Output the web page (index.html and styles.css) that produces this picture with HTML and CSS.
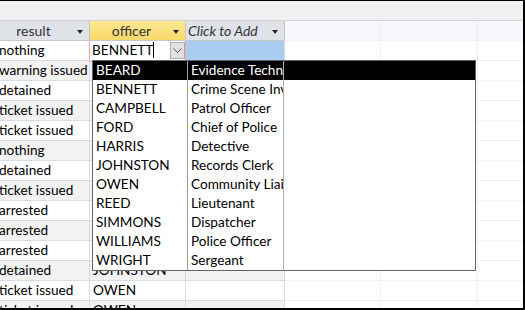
FILE: index.html
```html
<!DOCTYPE html>
<html>
<head>
<meta charset="utf-8">
<link rel="stylesheet" href="styles.css">
</head>
<body>
<div class="frame">
  <div class="topbar"></div>
  <div class="viewport">
    <div class="sheet">
      <div class="row head">
        <div class="cell c1 hd"><span class="htxt">result</span><span class="arr"></span></div>
        <div class="cell c2 hd cur"><span class="htxt">officer</span><span class="arr"></span></div>
        <div class="cell c3 hd"><span class="htxt add">Click to Add</span><span class="arr"></span></div>
        <div class="cell c4 hde"></div>
        <div class="cell c5 hde"></div>
        <div class="cell c6 hde"></div>
      </div>
      <div class="row">
        <div class="cell c1">nothing</div>
        <div class="cell c2 edit"><span class="val">BENNETT<span class="caret"></span></span><span class="btn"><svg width="9" height="6" viewBox="0 0 9 6"><path d="M0.5 0.5 L4.5 4.5 L8.5 0.5" fill="none" stroke="#555" stroke-width="1"/></svg></span></div>
        <div class="cell c3 sel"></div>
        <div class="cell c4 e"></div><div class="cell c5 e"></div><div class="cell c6 e"></div>
      </div>
      <div class="row alt">
        <div class="cell c1">warning issued</div><div class="cell c2"></div><div class="cell c3"></div>
        <div class="cell c4 e"></div><div class="cell c5 e"></div><div class="cell c6 e"></div>
      </div>
      <div class="row">
        <div class="cell c1">detained</div><div class="cell c2"></div><div class="cell c3"></div>
        <div class="cell c4 e"></div><div class="cell c5 e"></div><div class="cell c6 e"></div>
      </div>
      <div class="row alt">
        <div class="cell c1">ticket issued</div><div class="cell c2"></div><div class="cell c3"></div>
        <div class="cell c4 e"></div><div class="cell c5 e"></div><div class="cell c6 e"></div>
      </div>
      <div class="row">
        <div class="cell c1">ticket issued</div><div class="cell c2"></div><div class="cell c3"></div>
        <div class="cell c4 e"></div><div class="cell c5 e"></div><div class="cell c6 e"></div>
      </div>
      <div class="row alt">
        <div class="cell c1">nothing</div><div class="cell c2"></div><div class="cell c3"></div>
        <div class="cell c4 e"></div><div class="cell c5 e"></div><div class="cell c6 e"></div>
      </div>
      <div class="row">
        <div class="cell c1">detained</div><div class="cell c2"></div><div class="cell c3"></div>
        <div class="cell c4 e"></div><div class="cell c5 e"></div><div class="cell c6 e"></div>
      </div>
      <div class="row alt">
        <div class="cell c1">ticket issued</div><div class="cell c2"></div><div class="cell c3"></div>
        <div class="cell c4 e"></div><div class="cell c5 e"></div><div class="cell c6 e"></div>
      </div>
      <div class="row">
        <div class="cell c1">arrested</div><div class="cell c2"></div><div class="cell c3"></div>
        <div class="cell c4 e"></div><div class="cell c5 e"></div><div class="cell c6 e"></div>
      </div>
      <div class="row alt">
        <div class="cell c1">arrested</div><div class="cell c2"></div><div class="cell c3"></div>
        <div class="cell c4 e"></div><div class="cell c5 e"></div><div class="cell c6 e"></div>
      </div>
      <div class="row">
        <div class="cell c1">arrested</div><div class="cell c2"></div><div class="cell c3"></div>
        <div class="cell c4 e"></div><div class="cell c5 e"></div><div class="cell c6 e"></div>
      </div>
      <div class="row alt">
        <div class="cell c1">detained</div><div class="cell c2">JOHNSTON</div><div class="cell c3"></div>
        <div class="cell c4 e"></div><div class="cell c5 e"></div><div class="cell c6 e"></div>
      </div>
      <div class="row">
        <div class="cell c1">ticket issued</div><div class="cell c2">OWEN</div><div class="cell c3"></div>
        <div class="cell c4 e"></div><div class="cell c5 e"></div><div class="cell c6 e"></div>
      </div>
      <div class="row alt">
        <div class="cell c1">ticket issued</div><div class="cell c2">OWEN</div><div class="cell c3"></div>
        <div class="cell c4 e"></div><div class="cell c5 e"></div><div class="cell c6 e"></div>
      </div>
    </div>
    <div class="dropdown">
      <div class="item on"><span class="a">BEARD</span><span class="b">Evidence Technician</span></div>
      <div class="item"><span class="a">BENNETT</span><span class="b">Crime Scene Investigator</span></div>
      <div class="item"><span class="a">CAMPBELL</span><span class="b">Patrol Officer</span></div>
      <div class="item"><span class="a">FORD</span><span class="b">Chief of Police</span></div>
      <div class="item"><span class="a">HARRIS</span><span class="b">Detective</span></div>
      <div class="item"><span class="a">JOHNSTON</span><span class="b">Records Clerk</span></div>
      <div class="item"><span class="a">OWEN</span><span class="b">Community Liaison</span></div>
      <div class="item"><span class="a">REED</span><span class="b">Lieutenant</span></div>
      <div class="item"><span class="a">SIMMONS</span><span class="b">Dispatcher</span></div>
      <div class="item"><span class="a">WILLIAMS</span><span class="b">Police Officer</span></div>
      <div class="item"><span class="a">WRIGHT</span><span class="b">Sergeant</span></div>
    </div>
  </div>
</div>
</body>
</html>
```

FILE: styles.css
```css
html, body {
  margin: 0;
  padding: 0;
  background: #ffffff;
}
.frame {
  width: 525px;
  height: 310px;
  box-sizing: border-box;
  border-top: 1px solid #000;
  border-right: 2px solid #000;
  border-bottom: 2px solid #000;
  overflow: hidden;
  display: flex;
  flex-direction: column;
  font-family: Lato, "Open Sans", sans-serif;
  font-size: 13.6px;
  color: #000;
}
.topbar {
  height: 19px;
  flex: none;
  background: #f0f0f0;
}
.viewport {
  position: relative;
  flex: 1;
  overflow: hidden;
}
.sheet {
  margin-left: -10px;
}
.row {
  display: grid;
  grid-template-columns: 100px 96px 99px 96px 97px 60px;
  height: 20px;
}
.cell {
  box-sizing: border-box;
  height: 20px;
  border-right: 1px solid #d5dce8;
  border-bottom: 1px solid #d5dce8;
  line-height: 19px;
  white-space: nowrap;
  overflow: hidden;
  padding-left: 3px;
}
.c1 { padding-left: 9px; }
.row.alt .c1, .row.alt .c2, .row.alt .c3 { background: #f2f2f2; }
.cell.e {
  border-right-color: #eef0f5;
  border-bottom-color: #eef0f5;
  background: #fff;
}
.head .cell {
  border-top: 1px solid #d3d3d3;
  border-bottom: 1px solid #c8c8c8;
  border-right: 1px solid #c6c6c6;
  height: 21px;
  line-height: 19px;
}
.head { height: 21px; }
.hd {
  background: #dfe3e8;
  display: flex;
  align-items: center;
  padding: 0 6px 0 0;
  font-size: 14px;
}
.hd.cur {
  background: linear-gradient(#fde98f, #f8d86c);
}
.hde {
  background: #f7f7fe;
  border-right-color: #ececf2 !important;
  border-bottom-color: #eef0f5 !important;
}
.htxt {
  flex: 1;
  text-align: center;
  color: #333;
}
.htxt.add {
  text-align: left;
  padding-left: 2px;
  font-style: italic;
  color: #333;
}
.arr {
  width: 0;
  height: 0;
  border-left: 3.5px solid transparent;
  border-right: 3.5px solid transparent;
  border-top: 4px solid #222;
  margin-top: 2px;
}
.edit {
  border: 1px solid #f2a9b1;
  border-top: none;
  height: 21px;
  display: flex;
  align-items: flex-start;
  padding-left: 2px;
  background: #fff !important;
  position: relative;
  z-index: 1;
  margin-left: -1px;
}
.val {
  flex: 1;
  position: relative;
}
.caret {
  display: inline-block;
  width: 1px;
  height: 16px;
  background: #000;
  vertical-align: -3px;
}
.btn {
  width: 15px;
  height: 17px;
  margin: 1px 0 0 0;
  box-sizing: border-box;
  border: 1px solid #adadad;
  background: #e1e1e1;
  display: flex;
  align-items: center;
  justify-content: center;
}
.sel { background: #a9cdf0; }
.dropdown {
  position: absolute;
  left: 92px;
  top: 40px;
  width: 384px;
  height: 211px;
  box-sizing: border-box;
  border: 1px solid #646464;
  background: #fff;
  z-index: 2;
}
.item {
  display: flex;
  height: 19px;
  line-height: 19px;
  white-space: nowrap;
}
.item .a {
  width: 95px;
  box-sizing: border-box;
  padding-left: 3px;
  border-right: 1px solid #a0a0a0;
  overflow: hidden;
}
.item .b {
  width: 96px;
  box-sizing: border-box;
  padding-left: 3px;
  border-right: 1px solid #b0b0b0;
  overflow: hidden;
}
.item.on {
  background: #000;
  color: #fff;
}
```
